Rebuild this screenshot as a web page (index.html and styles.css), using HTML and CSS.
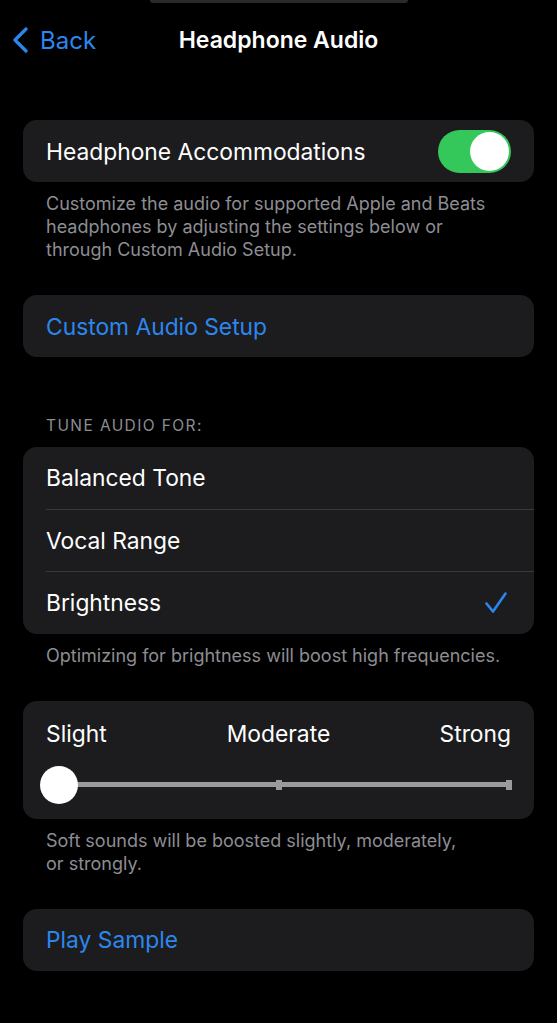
FILE: index.html
```html
<!DOCTYPE html>
<html lang="en">
<head>
  <meta charset="UTF-8" />
  <meta name="viewport" content="width=device-width, initial-scale=1.0" />
  <title>Headphone Audio</title>
  <link rel="stylesheet" href="styles.css">
</head>
<body>

  <div class="island"></div>

  <header class="nav">
    <a class="back" href="#">
      <svg width="18" height="26" viewBox="0 0 18 26">
        <path d="M15 2 L4 13 L15 24" fill="none" stroke="#2b87ee" stroke-width="3.2" stroke-linecap="round" stroke-linejoin="round" />
      </svg>
      <span>Back</span>
    </a>
    <h1>Headphone Audio</h1>
    <div></div>
  </header>

  <main class="content">

    <div class="group">
      <div class="row">
        <span>Headphone Accommodations</span>
        <div class="toggle on"><div class="knob"></div></div>
      </div>
    </div>
    <p class="footer">Customize the audio for supported Apple and Beats headphones by adjusting the settings below or through Custom Audio Setup.</p>

    <div class="group spaced">
      <div class="row link">Custom Audio Setup</div>
    </div>

    <p class="header">Tune Audio For:</p>
    <div class="group">
      <div class="option">Balanced Tone</div>
      <div class="option">Vocal Range</div>
      <div class="option">
        <span>Brightness</span>
        <svg class="check" width="24" height="24" viewBox="0 0 24 24">
          <path d="M2.5 12.5 L9 20.5 L21.5 2.5" fill="none" stroke="#2b87ee" stroke-width="2.6" stroke-linecap="round" stroke-linejoin="round" />
        </svg>
      </div>
    </div>
    <p class="footer">Optimizing for brightness will boost high frequencies.</p>

    <div class="group spaced slider-card">
      <div class="slider-labels">
        <span>Slight</span>
        <span>Moderate</span>
        <span>Strong</span>
      </div>
      <div class="slider">
        <div class="knob"></div>
        <div class="track">
          <div class="tick"></div>
          <div class="tick"></div>
        </div>
      </div>
    </div>
    <p class="footer">Soft sounds will be boosted slightly, moderately,<br>or strongly.</p>

    <div class="group spaced">
      <div class="row link">Play Sample</div>
    </div>

  </main>

</body>
</html>
```

FILE: styles.css
```css
body {
  margin: 0;
  background-color: #000;
  color: #fff;
  font-family: Inter, "Noto Sans", sans-serif;
}

.island {
  width: 258px;
  height: 3px;
  margin: 0 auto;
  background-color: #2a2a2c;
  border-radius: 0 0 10px 10px;
}

.nav {
  display: grid;
  grid-template-columns: 1fr auto 1fr;
  align-items: center;
  height: 50px;
  margin-top: 12px;
}

.back {
  display: flex;
  align-items: center;
  gap: 11px;
  padding-left: 11px;
  color: #2b87ee;
  text-decoration: none;
  font-size: 24px;
}

.nav h1 {
  margin: 0;
  font-size: 23px;
  font-weight: 600;
}

.content {
  padding: 55px 23px 0;
}

.group {
  background-color: #1c1c1e;
  border-radius: 14px;
  overflow: hidden;
}

.group.spaced {
  margin-top: 34px;
}

.row {
  height: 62px;
  padding: 0 23px;
  display: flex;
  align-items: center;
  justify-content: space-between;
  font-size: 22.8px;
}

.link {
  color: #2b87ee;
}

.toggle {
  width: 73px;
  height: 43px;
  border-radius: 22px;
  background-color: #34c759;
  display: flex;
  align-items: center;
  padding: 0 2px;
  box-sizing: border-box;
}

.toggle.on {
  justify-content: flex-end;
}

.toggle .knob {
  width: 39px;
  height: 39px;
  border-radius: 50%;
  background-color: #fff;
}

.footer {
  margin: 0;
  padding: 10px 30px 0 23px;
  font-size: 18px;
  line-height: 23px;
  color: #8d8d93;
}

.header {
  margin: 59px 0 11px;
  padding: 0 23px;
  font-size: 15.5px;
  line-height: 20px;
  letter-spacing: 1.4px;
  text-transform: uppercase;
  color: #8d8d93;
}

.option {
  height: 61.5px;
  margin-left: 23px;
  padding-right: 26px;
  display: flex;
  align-items: center;
  justify-content: space-between;
  font-size: 22.8px;
}

.option + .option {
  border-top: 1px solid #38383a;
}

.slider-card {
  height: 118px;
  padding: 0 23px;
  box-sizing: border-box;
}

.slider-labels {
  display: grid;
  grid-template-columns: 1fr auto 1fr;
  padding-top: 19px;
  font-size: 22.8px;
  line-height: 28px;
}

.slider-labels span:last-child {
  justify-self: end;
}

.slider {
  display: flex;
  align-items: center;
  margin-top: 18px;
  height: 38px;
}

.slider .knob {
  position: relative;
  z-index: 1;
  width: 38px;
  height: 38px;
  border-radius: 50%;
  background-color: #fff;
  flex-shrink: 0;
  margin-left: -6px;
  margin-right: -19px;
}

.track {
  flex: 1;
  height: 5px;
  margin-right: -1px;
  background-color: #9a9a9c;
  display: flex;
  justify-content: flex-end;
  align-items: center;
  gap: 224px;
}

.tick {
  width: 6px;
  height: 10px;
  background-color: #9a9a9c;
}
```
